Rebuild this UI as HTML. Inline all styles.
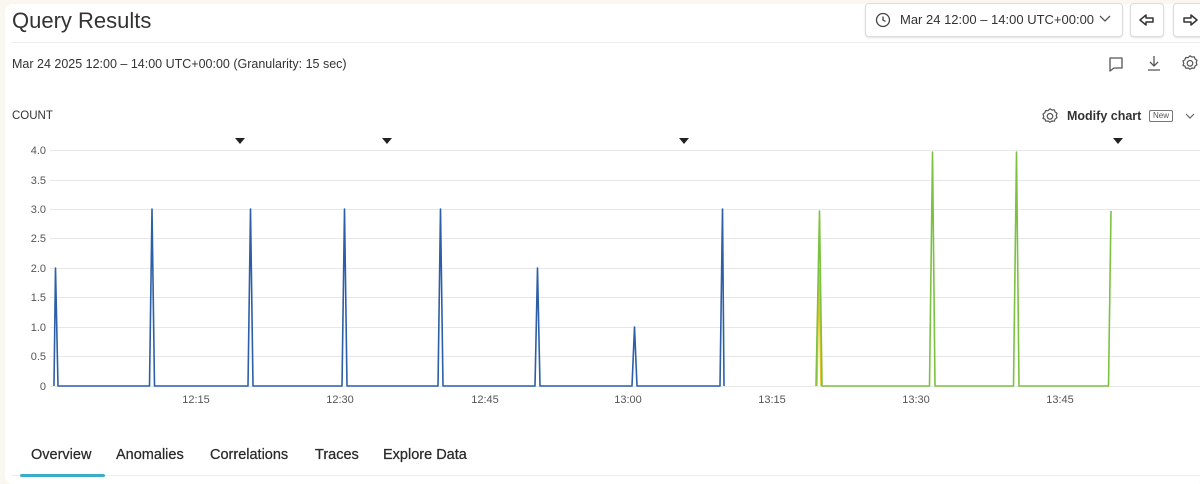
<!DOCTYPE html>
<html><head><meta charset="utf-8"><style>
*{margin:0;padding:0;box-sizing:border-box}
body{width:1200px;height:478px;background:#faf7f1;font-family:"Liberation Sans",sans-serif;color:#333;position:relative;overflow:hidden}
.card{position:absolute;left:5px;top:4px;width:1200px;height:480px;background:#fff;border-radius:8px}
.a{position:absolute;white-space:nowrap}
.btn{position:absolute;border:1px solid #ddd;border-radius:4px;background:#fff;box-shadow:0 1px 2px rgba(0,0,0,.12)}
.tab{position:absolute;top:447px;font-size:14.5px;color:#2a2a2a;-webkit-text-stroke:0.25px #2a2a2a;white-space:nowrap}
</style></head><body>
<div class="card"></div>
<div class="a" style="left:12px;top:8px;font-size:22px;color:#333">Query Results</div>
<div class="a" style="left:12px;top:42px;width:1190px;height:1px;background:#eee"></div>
<div class="btn" style="left:865px;top:3px;width:258px;height:34px"></div>
<svg class="a" style="left:874px;top:11px" width="18" height="18" viewBox="0 0 18 18"><circle cx="9" cy="9" r="6.5" fill="none" stroke="#444" stroke-width="1.3"/><path d="M9 5.5V9l2.5 1.5" fill="none" stroke="#444" stroke-width="1.3"/></svg>
<div class="a" style="left:900px;top:12px;font-size:13px;color:#333">Mar 24 12:00 – 14:00 UTC+00:00</div>
<svg class="a" style="left:1098px;top:13px" width="14" height="12"><path d="M2 3l5 5 5-5" fill="none" stroke="#555" stroke-width="1.3"/></svg>
<div class="btn" style="left:1130px;top:3px;width:34px;height:34px"></div>
<svg class="a" style="left:1138px;top:11px" width="18" height="18"><path d="M2 9l6-5v3h7v4H8v3z" fill="none" stroke="#333" stroke-width="1.5" stroke-linejoin="round"/></svg>
<div class="btn" style="left:1173px;top:3px;width:40px;height:34px"></div>
<svg class="a" style="left:1181px;top:11px" width="18" height="18"><path d="M16 9l-6-5v3H3v4h7v3z" fill="none" stroke="#333" stroke-width="1.5" stroke-linejoin="round"/></svg>
<div class="a" style="left:12px;top:57px;font-size:12.5px;color:#333">Mar 24 2025 12:00 – 14:00 UTC+00:00 (Granularity: 15 sec)</div>
<svg class="a" style="left:1107px;top:55px" width="18" height="18"><path d="M3 3h12v10H7l-4 3z" fill="none" stroke="#555" stroke-width="1.3" stroke-linejoin="round"/></svg>
<svg class="a" style="left:1145px;top:54px" width="18" height="18"><path d="M9 2v10M5 8l4 4 4-4M3 16h12" fill="none" stroke="#555" stroke-width="1.3"/></svg>
<svg class="a" style="left:1181px;top:54px" width="18" height="18"><path d="M9 1.8l2 1.2 2.3-.2.8 2.2 1.9 1.3-.8 2.2.8 2.2-1.9 1.3-.8 2.2-2.3-.2-2 1.2-2-1.2-2.3.2-.8-2.2L2 11.5l.8-2.2L2 7l1.9-1.3.8-2.2 2.3.2z" fill="none" stroke="#555" stroke-width="1.2" stroke-linejoin="round"/><circle cx="9" cy="9.3" r="2.8" fill="none" stroke="#555" stroke-width="1.2"/></svg>
<div class="a" style="left:12px;top:110px;font-size:11.5px;color:#333">COUNT</div>
<svg class="a" style="left:1041px;top:107px" width="18" height="18"><path d="M9 1.8l2 1.2 2.3-.2.8 2.2 1.9 1.3-.8 2.2.8 2.2-1.9 1.3-.8 2.2-2.3-.2-2 1.2-2-1.2-2.3.2-.8-2.2L2 11.5l.8-2.2L2 7l1.9-1.3.8-2.2 2.3.2z" fill="none" stroke="#555" stroke-width="1.2" stroke-linejoin="round"/><circle cx="9" cy="9.3" r="2.8" fill="none" stroke="#555" stroke-width="1.2"/></svg>
<div class="a" style="left:1067px;top:109px;font-size:12.5px;font-weight:bold;color:#333">Modify chart</div>
<div class="a" style="left:1149px;top:110px;font-size:8px;color:#555;border:1px solid #777;border-radius:2px;padding:0 3px;line-height:10px">New</div>
<svg class="a" style="left:1184px;top:111px" width="12" height="10"><path d="M2 3l4 4 4-4" fill="none" stroke="#666" stroke-width="1.2"/></svg>
<svg class="a" style="left:0;top:0" width="1200" height="478">
<g stroke="#e8e8e8" stroke-width="1">
<line x1="50" y1="150.5" x2="1200" y2="150.5"/><line x1="50" y1="180.5" x2="1200" y2="180.5"/><line x1="50" y1="209.5" x2="1200" y2="209.5"/><line x1="50" y1="238.5" x2="1200" y2="238.5"/><line x1="50" y1="268.5" x2="1200" y2="268.5"/><line x1="50" y1="297.5" x2="1200" y2="297.5"/><line x1="50" y1="327.5" x2="1200" y2="327.5"/><line x1="50" y1="356.5" x2="1200" y2="356.5"/><line x1="50" y1="386.5" x2="1200" y2="386.5"/>
</g>
<g font-size="11" fill="#555" text-anchor="end" font-family="Liberation Sans">
<text x="46" y="154">4.0</text><text x="46" y="184">3.5</text><text x="46" y="213">3.0</text><text x="46" y="242">2.5</text><text x="46" y="272">2.0</text><text x="46" y="301">1.5</text><text x="46" y="331">1.0</text><text x="46" y="360">0.5</text><text x="46" y="390">0</text>
</g>
<g font-size="11" fill="#555" text-anchor="middle" font-family="Liberation Sans">
<text x="196" y="403">12:15</text><text x="340" y="403">12:30</text><text x="485" y="403">12:45</text><text x="628" y="403">13:00</text><text x="772" y="403">13:15</text><text x="916" y="403">13:30</text><text x="1060" y="403">13:45</text>
</g>
<g fill="#222"><path d="M235 138h10l-5 6z"/><path d="M382 138h10l-5 6z"/><path d="M679 138h10l-5 6z"/><path d="M1113 138h10l-5 6z"/></g>
<path d="M54 386L55.5 268L58 386H149.5L152 209L154.5 386H248L250.5 209L253 386H342L344.5 209L347 386H438L440.5 209L443 386H535L537.5 268L540 386H632L634.5 327L637 386H720L722.5 209L724 386" fill="none" stroke="#2d5fa8" stroke-width="1.6" stroke-linejoin="round"/>
<path d="M817 386L819 268L821 386" fill="none" stroke="#e8c520" stroke-width="1.6"/>
<path d="M816 386L819.5 211L822 386H929.5L932.5 152L935 386H1013.5L1016.5 152L1019 386H1108.5L1111 211" fill="none" stroke="#7cc142" stroke-width="1.6" stroke-linejoin="round"/>
</svg>
<div class="tab" style="left:31px">Overview</div>
<div class="tab" style="left:116px">Anomalies</div>
<div class="tab" style="left:210px">Correlations</div>
<div class="tab" style="left:315px">Traces</div>
<div class="tab" style="left:383px">Explore Data</div>
<div class="a" style="left:12px;top:475px;width:1190px;height:1px;background:#eee"></div>
<div class="a" style="left:20px;top:474px;width:85px;height:3px;background:#3aaec8;border-radius:2px"></div>
</body></html>
